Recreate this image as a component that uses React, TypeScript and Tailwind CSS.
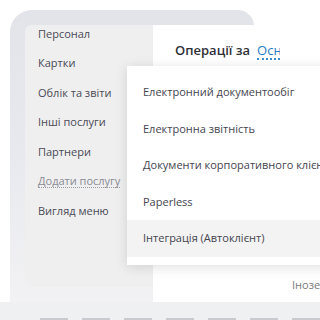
const sideItems = [
  'Персонал',
  'Картки',
  'Облік та звіти',
  'Інші послуги',
  'Партнери',
];

const menuItems = [
  'Електронний документообіг',
  'Електронна звітність',
  'Документи корпоративного клієнта',
  'Paperless',
  'Інтеграція (Автоклієнт)',
];

const App = () => {
  return (
    <div className="relative h-[320px] w-[320px] overflow-hidden bg-white font-['Open_Sans',sans-serif] text-[11px] text-[#4a4a56]">
      <div className="flex h-[302px] w-[310px] flex-col">
        <div className="ml-[10px] mt-[10px] flex w-[244px] flex-1 flex-col rounded-tl-[22px] rounded-tr-[16px] bg-gradient-to-b from-[#e3e4ea] via-[#e8e9ee] to-[#f2f2f4] pl-[15px] pt-[15px]">
          <div className="flex h-[277px] w-[295px]">
            <div className="flex h-[262px] w-[128px] shrink-0 flex-col overflow-hidden rounded-tl-[6px] rounded-bl-[12px] bg-[#efefef] pl-[13px]">
              <div className="-mt-[6px] flex flex-col">
                {sideItems.map((t) => (
                  <div key={t} className="flex h-[29.5px] items-center">
                    {t}
                  </div>
                ))}
                <div className="flex h-[29.5px] items-center">
                  <span className="border-b border-dotted border-[#9a9aa4] leading-[13px] text-[#8a8a94]">
                    Додати послугу
                  </span>
                </div>
                <div className="flex h-[29.5px] items-center">Вигляд меню</div>
              </div>
            </div>
            <div className="flex flex-1 flex-col bg-white">
              <div className="flex items-center pl-[22px] pt-[16px]">
                <span className="text-[13px] font-semibold text-[#2f2f38]">
                  Операції за
                </span>
                <span className="ml-[7px] w-[23px] overflow-hidden whitespace-nowrap border-b-2 border-dotted border-[#3a8fd0] text-[13px] leading-[16px] text-[#2a7cc4]">
                  Основні
                </span>
              </div>
              <div className="mt-auto mb-[9px] flex pl-[139px] whitespace-nowrap text-[#7a7a82]">
                Іноземна
              </div>
            </div>
          </div>
        </div>
      </div>
      <div className="flex h-[18px] flex-col bg-[#eef0f2]">
        <div className="mt-auto flex h-[2px] gap-[14px] pl-[40px]">
          {[0, 1, 2, 3, 4, 5, 6].map((i) => (
            <div key={i} className="h-[2px] w-[30px] bg-[#c8cacf]" />
          ))}
        </div>
      </div>

      <div className="absolute left-[127px] top-[66px] w-[230px] bg-white py-[8px] text-[#45454f] shadow-[0_2px_12px_rgba(0,0,0,0.13)]">
        {menuItems.map((t, i) => (
          <div
            key={t}
            className={
              i === 4
                ? 'flex h-[36.5px] items-center whitespace-nowrap bg-[#f3f3f3] pl-[16px]'
                : 'flex h-[36.5px] items-center whitespace-nowrap pl-[16px]'
            }
          >
            {t}
          </div>
        ))}
      </div>
    </div>
  );
};

export default App;
